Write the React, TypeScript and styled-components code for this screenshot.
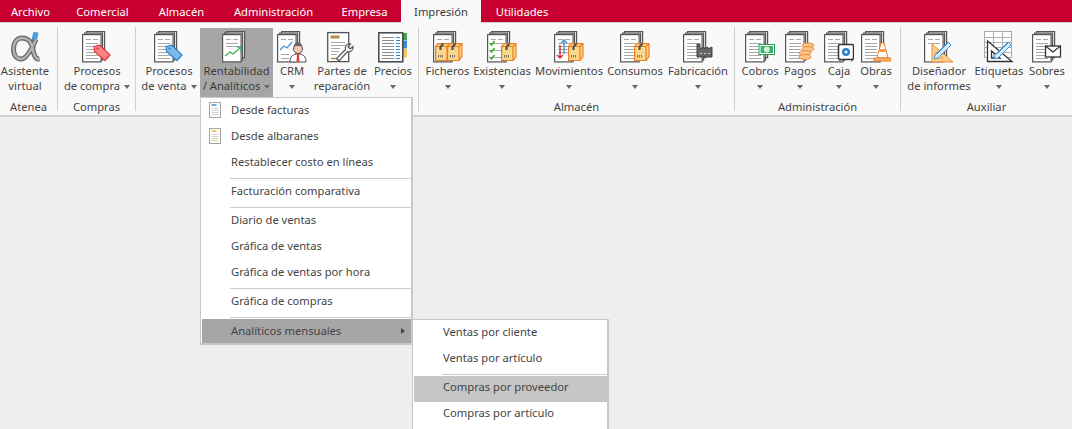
import { ReactNode } from "react";
import styled, { createGlobalStyle } from "styled-components";

const GlobalStyle = createGlobalStyle`
  html, body {
    margin: 0;
    padding: 0;
    background: #eeeeee;
  }
  body {
    font-family: "Noto Sans", "Open Sans", sans-serif;
    font-size: 11.2px;
    color: #444;
  }
`;

const Page = styled.div`
  position: relative;
  width: 1072px;
  height: 429px;
  overflow: hidden;
  background: #eeeeee;
`;

const TabBar = styled.div`
  display: flex;
  height: 22px;
  background: #c8002f;
`;

const Tab = styled.div<{ $w: number; $active?: boolean }>`
  width: ${(p) => p.$w}px;
  height: ${(p) => (p.$active ? 24 : 22)}px;
  line-height: 23px;
  text-align: center;
  font-size: 11.2px;
  color: ${(p) => (p.$active ? "#3a3a3a" : "#fff")};
  background: ${(p) => (p.$active ? "#f9f9f9" : "transparent")};
  position: relative;
  z-index: 1;
`;

const Ribbon = styled.div`
  display: flex;
  height: 95px;
  box-sizing: border-box;
  background: #f9f9f9;
  border-top: 1px solid #d0d0d0;
  border-bottom: 2px solid #d2d2d2;
  padding-top: 4px;
`;

const Group = styled.div<{ $w: number; $last?: boolean }>`
  width: ${(p) => p.$w}px;
  height: 84px;
  padding-top: 1px;
  box-sizing: border-box;
  display: flex;
  flex-direction: column;
  border-right: ${(p) => (p.$last ? "none" : "1px solid #cfcfcf")};
`;

const Buttons = styled.div<{ $pad?: number }>`
  display: flex;
  flex: none;
  height: 71px;
  padding-left: ${(p) => p.$pad ?? 0}px;
`;

const GroupLabel = styled.div`
  flex: none;
  text-align: center;
  font-size: 11.2px;
  line-height: 15px;
  color: #444;
`;

const Button = styled.div<{ $w: number; $hover?: boolean }>`
  width: ${(p) => p.$w}px;
  height: 69px;
  display: flex;
  flex-direction: column;
  align-items: center;
  background: ${(p) => (p.$hover ? "#a6a6a6" : "transparent")};
  color: ${(p) => (p.$hover ? "#3a3a3a" : "#444")};
`;

const IconSlot = styled.div`
  height: 35px;
  padding-top: 3px;
  box-sizing: border-box;
  line-height: 0;
`;

const Line = styled.div`
  height: 15px;
  line-height: 15px;
  font-size: 11.2px;
  white-space: nowrap;
  display: flex;
  align-items: center;
  gap: 4px;
`;

const Caret = styled.span`
  display: inline-block;
  width: 0;
  height: 0;
  margin-top: 2px;
  border-left: 3.5px solid transparent;
  border-right: 3.5px solid transparent;
  border-top: 4px solid #666;
`;

const Menu = styled.div`
  position: absolute;
  left: 200px;
  top: 97px;
  width: 213px;
  box-sizing: border-box;
  background: #fff;
  border: 1px solid #c8c8c8;
  border-right-width: 2px;
  border-bottom-width: 2px;
  z-index: 5;
`;

const SubMenu = styled(Menu)`
  left: 412px;
  top: 319px;
  width: 197px;
  padding: 0 0 12px 1px;
  z-index: 6;
`;

const Row = styled.div<{ $pad: number; $bg?: string; $h?: number; $lift?: number }>`
  position: relative;
  height: ${(p) => p.$h ?? 26}px;
  line-height: ${(p) => (p.$h ?? 26) - (p.$lift ?? 2)}px;
  padding-left: ${(p) => p.$pad}px;
  font-size: 11.2px;
  color: #444;
  background: ${(p) => p.$bg ?? "transparent"};
`;

const ActiveRow = styled(Row)`
  margin: 1px 0 0 1px;
`;

const Sep = styled.div<{ $left: number; $gap?: number }>`
  height: 3px;
  margin-left: ${(p) => p.$left}px;
  margin-bottom: ${(p) => p.$gap ?? 0}px;
  border-bottom: 1px solid #cdcdcd;
  box-sizing: border-box;
`;

const RowIcon = styled.svg`
  position: absolute;
  left: 8px;
  top: 4px;
`;

const RowArrow = styled.span`
  position: absolute;
  right: 6px;
  top: 9px;
  width: 0;
  height: 0;
  border-top: 3.5px solid transparent;
  border-bottom: 3.5px solid transparent;
  border-left: 4px solid #444;
`;

const INK = "#555";

const Sheets = () => (
  <g fill="#fff" stroke={INK} strokeWidth="1.2">
    <rect x="4.6" y="0.6" width="18" height="26" />
    <rect x="2.6" y="2.1" width="18" height="27" />
    <rect x="0.6" y="3.6" width="18.5" height="27.3" />
  </g>
);

const TextLines = ({ ys = [8, 12, 15, 18, 21, 24, 27] }: { ys?: number[] }) => (
  <g stroke="#a8a8a8" strokeWidth="1">
    <path d="M4 8.500h5M11 8.500h5" />
    {ys.slice(1).map((y) => (
      <path key={y} d={`M4 ${y + 0.5}h12`} />
    ))}
  </g>
);

const Doc = ({ children, lines }: { children?: ReactNode; lines?: number[] }) => (
  <svg width="30" height="32" viewBox="0 0 30 32">
    <Sheets />
    <TextLines ys={lines} />
    {children}
  </svg>
);

const Tag = ({ fill, edge }: { fill: string; edge: string }) => (
  <g>
    <path
      d="M12 15.500 L17.500 14 L28 24 L23 29.500 L12.500 20.500 Z"
      fill={fill}
      stroke={edge}
      strokeWidth="1.200"
      strokeLinejoin="round"
    />
    <rect x="14.500" y="16.500" width="2" height="2" fill={edge} />
  </g>
);

const Box = ({ x }: { x: number }) => (
  <g>
    <path
      d={`M${x + 3} 12.600h12v13l-3 3.900h-11.400v-14z`}
      fill="#fbd78b"
      stroke="#ed7d22"
      strokeWidth="1.200"
      strokeLinejoin="round"
    />
    <path d={`M${x + 0.6} 15.500h11.400v14M${x + 12} 15.500l3 -2.900`} fill="none" stroke="#ed7d22" strokeWidth="1.200" />
    <path d={`M${x + 5.500} 19l0 -3 3 -3.500`} fill="none" stroke={INK} strokeWidth="2.200" />
    <path d={`M${x + 3.500} 24v2.500M${x + 5.500} 24v2.500M${x + 7.500} 24v2.500`} stroke={INK} strokeWidth="0.800" />
  </g>
);

const ALPHA_PATH = "M31.500 28 C27 28.500 26 24 24 15 C22 8 18 7 14 7 C8.500 7 5.500 12 5.500 18 C5.500 24.500 9 28 13 28 C18 28 23 20 28 8";

const Alpha = () => (
  <svg width="34" height="32" viewBox="0 0 34 32">
    <path d="M25.500 1 L30.500 1.500 L27 19 L23 10 Z" fill="#4a9fdc" />
    <path d={ALPHA_PATH} fill="none" stroke="#666" strokeWidth="5" />
    <path d={ALPHA_PATH} fill="none" stroke="#b0b0b0" strokeWidth="2.600" />
  </svg>
);

const Person = () => (
  <svg width="30" height="32" viewBox="0 0 30 32">
    <Sheets />
    <path d="M4 8.500h5M11 8.500h5" stroke="#a8a8a8" />
    <path d="M3 19l4 -4 3 2 5 -6" fill="none" stroke="#3f97dc" strokeWidth="1.300" />
    <path d="M4 23.500h8M4 27.500h8" stroke="#a8a8a8" />
    <path d="M13 31c0 -6 3 -8 8 -8s8 2 8 8z" fill="#fff" stroke={INK} />
    <path d="M20 23h2l.5 8h-3z" fill="#e5383b" />
    <circle cx="21" cy="18" r="4.500" fill="#f3c6b0" stroke={INK} />
    <path d="M16.500 17c0 -4 2 -5.500 4.500 -5.500s4.500 1.500 4.500 5.500l-1.500 -2h-6z" fill="#666" />
  </svg>
);

const Wrench = () => (
  <svg width="30" height="32" viewBox="0 0 30 32">
    <rect x="0.700" y="1.600" width="21" height="29" fill="#fff" stroke={INK} strokeWidth="1.300" />
    <rect x="3.500" y="4.500" width="9" height="3" fill="#b58a4f" />
    <path d="M4 11.500h14M4 14.500h14M4 17.500h9M4 20.500h8M4 23.500h6" stroke="#a8a8a8" />
    <path d="M4 27.500h8" stroke="#b58a4f" strokeWidth="1.500" />
    <path
      d="M12 30l-2.500 -2.500 9 -9c-1 -3 1 -6 5 -5.500l-2.500 3 2 2 3 -2.500c.5 4 -2.500 6 -5.500 5z"
      fill="#fff"
      stroke={INK}
      strokeWidth="1.200"
    />
  </svg>
);

const Prices = () => (
  <svg width="30" height="32" viewBox="0 0 30 32">
    <rect x="24" y="2" width="5" height="7" fill="#3fa45b" />
    <rect x="24" y="9.500" width="5" height="8" fill="#3f8ed0" />
    <rect x="24" y="18" width="5" height="8.500" fill="#f6c465" />
    <rect x="0.800" y="1.800" width="24" height="29" fill="#fff" stroke="#444" strokeWidth="1.500" />
    <path d="M4 6.500h12M4 9.500h12M4 12.500h12M4 15.500h12M4 18.500h12M4 21.500h12M4 24.500h12M4 27.500h12" stroke="#8b8b8b" />
    <path d="M18 6.500h4M18 9.500h4M18 12.500h4M18 15.500h4M18 18.500h4M18 21.500h4M18 24.500h4M18 27.500h4" stroke="#2c8fd6" />
  </svg>
);

const Checks = () => (
  <g fill="none" stroke="#4cae3c" strokeWidth="1.700">
    <path d="M2.500 12l2 2 3 -4M2.500 19l2 2 3 -4M2.500 26l2 2 3 -4" />
  </g>
);

const Factory = () => (
  <g>
    <path d="M14 13h3v5l4 -2v2l4 -2v2l4 -2v10h-15z" fill="#666" stroke="#444" />
    <path d="M17 22.500h2M21 22.500h2M25 22.500h2" stroke="#ccc" />
  </g>
);

const Money = () => (
  <g>
    <rect x="14" y="13.500" width="15.500" height="10" fill="#fff" stroke="#1f9d55" />
    <rect x="15.500" y="15" width="12.500" height="7" fill="#38b26a" />
    <circle cx="21.800" cy="18.500" r="3" fill="#cfeeda" />
  </g>
);

const Coins = () => (
  <g fill="#fbc48a" stroke="#ed8a3c">
    <ellipse cx="23" cy="14.500" rx="6" ry="2.500" />
    <ellipse cx="23" cy="18" rx="6" ry="2.500" />
    <ellipse cx="20" cy="22" rx="6" ry="2.500" />
    <ellipse cx="20" cy="26" rx="6" ry="2.500" />
  </g>
);

const Safe = () => (
  <g>
    <rect x="14.500" y="13.500" width="15" height="15" rx="1.500" fill="#fff" stroke="#333" strokeWidth="1.500" />
    <circle cx="22" cy="21" r="4" fill="#2d7fc9" />
    <circle cx="22" cy="21" r="1.500" fill="#fff" />
    <path d="M16 28.500v2M28 28.500v2" stroke="#333" />
  </g>
);

const Cone = () => (
  <g>
    <path d="M20 12h3l4 15h-11z" fill="#fff" stroke="#ef7d22" />
    <path d="M18.500 18h6l1 3h-8z" fill="#f59a4a" />
    <path d="M13 27h17v3h-17z" fill="#fbb56e" stroke="#ef7d22" />
  </g>
);

const Arrows = () => (
  <g fill="none" strokeWidth="1.400">
    <path d="M10 23v-14M7 12l3 -3 3 3" stroke="#3f97dc" />
    <path d="M6 14v13M3 24l3 3 3 -3" stroke="#d92b3a" />
  </g>
);

const Pencil = () => (
  <g>
    <path d="M11 24l13 -13 3 3 -13 13 -4 1z" fill="#d6ecfb" stroke="#3f97dc" />
    <path d="M13 23l12 -12" stroke="#3f97dc" />
  </g>
);

const SetSquare = () => (
  <svg width="30" height="32" viewBox="0 0 30 32">
    <Sheets />
    <path d="M4 8.500h5M11 8.500h5M4 12.500h12" stroke="#a8a8a8" />
    <path d="M8 13 L29 31 H8 Z M12 21 V27 H19 Z" fill="#fbd08a" stroke="#ed8a3c" fillRule="evenodd" />
    <Pencil />
  </svg>
);

const TableSquare = () => (
  <svg width="30" height="32" viewBox="0 0 30 32">
    <rect x="0.500" y="0.500" width="27" height="26" fill="#fff" stroke="#aaa" />
    <path d="M0.500 6.500h27M0.500 11.500h27M0.500 16.500h27M0.500 21.500h27M9.500 1v26M18.500 1v26" stroke="#b0b0b0" />
    <path d="M3.500 10 L28 30.500 H3.500 Z M7.500 20 V27 H16 Z" fill="#fff" stroke="#333" strokeWidth="1.300" fillRule="evenodd" />
    <Pencil />
  </svg>
);

const Envelope = () => (
  <g>
    <rect x="13.500" y="15" width="15" height="11" fill="#fff" stroke="#333" strokeWidth="1.300" />
    <path d="M13.500 15l7.500 6 7.500 -6" fill="none" stroke="#333" strokeWidth="1.200" />
  </g>
);

const Chart = () => (
  <g fill="none" stroke="#3fae49" strokeWidth="1.300">
    <path d="M3 25l5 -4 3 2 7 -6" />
    <path d="M15 16h4v4" />
  </g>
);

const SmallDoc = ({ accent, foot }: { accent: string; foot: string }) => (
  <RowIcon width="12" height="16" viewBox="0 0 12 16">
    <rect x="0.500" y="0.500" width="11" height="15" fill="#fff" stroke="#a5a5a5" />
    <path d="M2.500 3h5" stroke={accent} strokeWidth="1.500" />
    <path d="M2.500 6.500h7M2.500 8.500h7M2.500 10.500h7" stroke="#cfcfcf" />
    <path d="M2.500 12.500h7" stroke={foot} />
  </RowIcon>
);

type Btn = { w: number; l1: string; l2?: string; caret?: boolean; icon: ReactNode; hover?: boolean };

const RibbonButton = ({ w, l1, l2, caret = true, icon, hover }: Btn) => (
  <Button $w={w} $hover={hover}>
    <IconSlot>{icon}</IconSlot>
    <Line>{l1}</Line>
    <Line>
      {l2}
      {caret && <Caret />}
    </Line>
  </Button>
);

const tabs = [
  { w: 61, t: "Archivo" },
  { w: 83, t: "Comercial" },
  { w: 75, t: "Almacén" },
  { w: 109, t: "Administración" },
  { w: 73, t: "Empresa" },
  { w: 80, t: "Impresión", active: true },
  { w: 82, t: "Utilidades" },
];

const groups: { w: number; pad: number; label: string; last?: boolean; items: Btn[] }[] = [
  {
    w: 58,
    pad: 0,
    label: "Atenea",
    items: [{ w: 50, l1: "Asistente", l2: "virtual", caret: false, icon: <Alpha /> }],
  },
  {
    w: 78,
    pad: 8,
    label: "Compras",
    items: [
      {
        w: 62,
        l1: "Procesos",
        l2: "de compra",
        icon: (
          <Doc>
            <Tag fill="#f98585" edge="#e8343e" />
          </Doc>
        ),
      },
    ],
  },
  {
    w: 283,
    pad: 2,
    label: "",
    items: [
      {
        w: 62,
        l1: "Procesos",
        l2: "de venta",
        icon: (
          <Doc>
            <Tag fill="#7cb8ea" edge="#2b83cf" />
          </Doc>
        ),
      },
      {
        w: 73,
        l1: "Rentabilidad",
        l2: "/ Analíticos",
        hover: true,
        icon: (
          <Doc lines={[8, 12, 15]}>
            <Chart />
          </Doc>
        ),
      },
      { w: 38, l1: "CRM", icon: <Person /> },
      { w: 62, l1: "Partes de", l2: "reparación", caret: false, icon: <Wrench /> },
      { w: 40, l1: "Precios", icon: <Prices /> },
    ],
  },
  {
    w: 316,
    pad: 2,
    label: "Almacén",
    items: [
      {
        w: 53,
        l1: "Ficheros",
        icon: (
          <Doc lines={[8, 12]}>
            <Box x={2} />
            <Box x={14} />
          </Doc>
        ),
      },
      {
        w: 56,
        l1: "Existencias",
        icon: (
          <Doc lines={[8, 12, 19, 26]}>
            <Checks />
            <Box x={14} />
          </Doc>
        ),
      },
      {
        w: 78,
        l1: "Movimientos",
        icon: (
          <Doc lines={[8, 12, 15, 18, 21]}>
            <Arrows />
            <Box x={14} />
          </Doc>
        ),
      },
      {
        w: 54,
        l1: "Consumos",
        icon: (
          <Doc>
            <Box x={14} />
          </Doc>
        ),
      },
      {
        w: 72,
        l1: "Fabricación",
        icon: (
          <Doc>
            <Factory />
          </Doc>
        ),
      },
    ],
  },
  {
    w: 166,
    pad: 3,
    label: "Administración",
    items: [
      {
        w: 44,
        l1: "Cobros",
        icon: (
          <Doc>
            <Money />
          </Doc>
        ),
      },
      {
        w: 36,
        l1: "Pagos",
        icon: (
          <Doc>
            <Coins />
          </Doc>
        ),
      },
      {
        w: 42,
        l1: "Caja",
        icon: (
          <Doc>
            <Safe />
          </Doc>
        ),
      },
      {
        w: 32,
        l1: "Obras",
        icon: (
          <Doc>
            <Cone />
          </Doc>
        ),
      },
    ],
  },
  {
    w: 171,
    pad: 4,
    label: "Auxiliar",
    last: true,
    items: [
      { w: 68, l1: "Diseñador", l2: "de informes", caret: false, icon: <SetSquare /> },
      { w: 52, l1: "Etiquetas", icon: <TableSquare /> },
      {
        w: 44,
        l1: "Sobres",
        icon: (
          <Doc>
            <Envelope />
          </Doc>
        ),
      },
    ],
  },
];

export default function App() {
  return (
    <Page>
      <GlobalStyle />
      <TabBar>
        {tabs.map((t) => (
          <Tab key={t.t} $w={t.w} $active={t.active}>
            {t.t}
          </Tab>
        ))}
      </TabBar>
      <Ribbon>
        {groups.map((g, i) => (
          <Group key={i} $w={g.w} $last={g.last}>
            <Buttons $pad={g.pad}>
              {g.items.map((b) => (
                <RibbonButton key={b.l1 + (b.l2 ?? "")} {...b} />
              ))}
            </Buttons>
            <GroupLabel>{g.label}</GroupLabel>
          </Group>
        ))}
      </Ribbon>
      <Menu>
        <Row $pad={30}>
          <SmallDoc accent="#3f8ed0" foot="#cfcfcf" />
          Desde facturas
        </Row>
        <Row $pad={30}>
          <SmallDoc accent="#f5b335" foot="#f5d480" />
          Desde albaranes
        </Row>
        <Row $pad={30}>Restablecer costo en líneas</Row>
        <Sep $left={29} />
        <Row $pad={30}>Facturación comparativa</Row>
        <Sep $left={29} />
        <Row $pad={30}>Diario de ventas</Row>
        <Row $pad={30}>Gráfica de ventas</Row>
        <Row $pad={30}>Gráfica de ventas por hora</Row>
        <Sep $left={29} />
        <Row $pad={30}>Gráfica de compras</Row>
        <Sep $left={29} />
        <ActiveRow $pad={29} $h={24} $lift={0} $bg="#a6a6a6">
          Analíticos mensuales
          <RowArrow />
        </ActiveRow>
      </Menu>
      <SubMenu>
        <Row $pad={29}>Ventas por cliente</Row>
        <Row $pad={29}>Ventas por artículo</Row>
        <Sep $left={28} $gap={1} />
        <Row $pad={29} $bg="#c6c6c6" $lift={4}>
          Compras por proveedor
        </Row>
        <Row $pad={29} $lift={4}>
          Compras por artículo
        </Row>
      </SubMenu>
    </Page>
  );
}
